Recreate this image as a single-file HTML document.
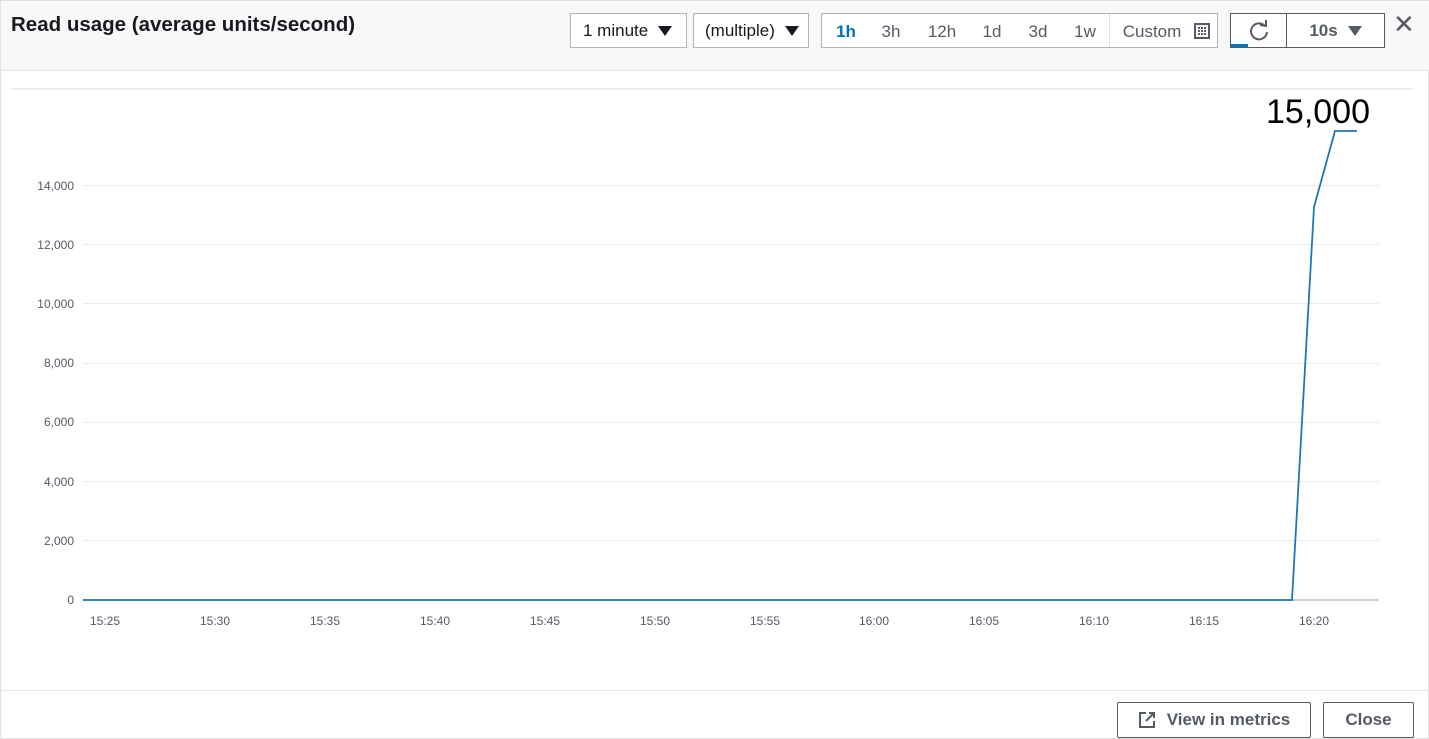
<!DOCTYPE html>
<html><head><meta charset="utf-8"><style>
*{box-sizing:border-box;margin:0;padding:0}
body{width:1429px;height:739px;background:#fff;font-family:"Liberation Sans",sans-serif;position:relative;overflow:hidden;border:1px solid #e0e0e0}
.hdr{position:absolute;left:0;top:0;width:1429px;height:70px;background:#f8f8f8;border-bottom:1px solid #e6e6e6}
.title{position:absolute;left:10px;top:12px;font-size:20.5px;font-weight:bold;color:#16191f}
.box{position:absolute;top:12px;height:35px;border:1px solid #aab7b8;background:#fff;font-size:17px;color:#16191f;display:flex;align-items:center}
.tri{display:inline-block;width:0;height:0;border-left:7px solid transparent;border-right:7px solid transparent;border-top:10px solid #16191f;margin-left:10px}
.seg span{position:absolute;top:8px;color:#545b64;transform:translateX(-50%)}
.foot{position:absolute;left:0;top:689px;width:1429px;border-top:1px solid #e6e6e6}
.btn{position:absolute;top:701px;height:36px;border:1.5px solid #545b64;border-radius:2px;background:#fff;font-size:17px;font-weight:bold;color:#545b64;display:flex;align-items:center;justify-content:center}
</style></head><body>
<div class="hdr">
<div class="title">Read usage (average units/second)</div>
<div class="box" style="left:569px;width:117px;padding-left:12px">1 minute<span class="tri"></span></div>
<div class="box" style="left:692px;width:116px;padding-left:11px">(multiple)<span class="tri"></span></div>
<div class="box seg" style="left:820px;width:397px">
<span style="left:24px;color:#0073bb;font-weight:bold">1h</span><span style="left:69px">3h</span><span style="left:120px">12h</span><span style="left:170px">1d</span><span style="left:216px">3d</span><span style="left:263px">1w</span>
<div style="position:absolute;left:287px;top:0;height:100%;border-left:1px solid #e0e0e0"></div>
<span style="left:330px">Custom</span>
<svg width="16" height="16" style="position:absolute;left:372px;top:9px" viewBox="0 0 16 16"><rect x="1" y="1" width="14" height="14" fill="none" stroke="#545b64" stroke-width="2"/><g fill="#545b64"><rect x="4" y="4" width="2" height="2"/><rect x="7" y="4" width="2" height="2"/><rect x="10" y="4" width="2" height="2"/><rect x="4" y="7" width="2" height="2"/><rect x="7" y="7" width="2" height="2"/><rect x="10" y="7" width="2" height="2"/><rect x="4" y="10" width="2" height="2"/><rect x="7" y="10" width="2" height="2"/><rect x="10" y="10" width="2" height="2"/></g></svg>
</div>
<div class="box" style="left:1229px;width:155px;border-color:#545b64">
<div style="width:56px;height:100%;border-right:1px solid #545b64;position:relative;display:flex;align-items:center;justify-content:center">
<svg width="22" height="22" viewBox="0 0 22 22"><path d="M17 6A8 8 0 1 0 19 12" fill="none" stroke="#545b64" stroke-width="2"/><path d="M12 5L18 6L18 0" fill="none" stroke="#545b64" stroke-width="2"/></svg>
<div style="position:absolute;left:0;bottom:0;width:17px;height:3px;background:#0073bb"></div></div>
<div style="flex:1;display:flex;align-items:center;justify-content:center;font-weight:bold;color:#545b64">10s<span class="tri" style="border-top-color:#545b64"></span></div>
</div>
<div style="position:absolute;left:1392px;top:8px;font-size:26px;color:#545b64">✕</div>
</div>
<svg style="position:absolute;left:0;top:0" width="1429" height="690">
<line x1="10" y1="88" x2="1412" y2="88" stroke="#eeeeee" stroke-width="2"/>
<g stroke="#ececec" stroke-width="1">
<line x1="82" y1="184.5" x2="1378" y2="184.5"/><line x1="82" y1="243.5" x2="1378" y2="243.5"/><line x1="82" y1="302.5" x2="1378" y2="302.5"/><line x1="82" y1="362.5" x2="1378" y2="362.5"/><line x1="82" y1="421.5" x2="1378" y2="421.5"/><line x1="82" y1="480.5" x2="1378" y2="480.5"/><line x1="82" y1="539.5" x2="1378" y2="539.5"/></g>
<line x1="82" y1="599" x2="1378" y2="599" stroke="#cfcfcf" stroke-width="2"/>
<g font-size="12" fill="#545b64" text-anchor="end" font-family="Liberation Sans">
<text x="73" y="189">14,000</text><text x="73" y="248">12,000</text><text x="73" y="307">10,000</text><text x="73" y="366">8,000</text><text x="73" y="425">6,000</text><text x="73" y="485">4,000</text><text x="73" y="544">2,000</text><text x="73" y="603">0</text></g>
<g font-size="12" fill="#545b64" text-anchor="middle" font-family="Liberation Sans">
<text x="104" y="624">15:25</text><text x="214" y="624">15:30</text><text x="324" y="624">15:35</text><text x="434" y="624">15:40</text><text x="544" y="624">15:45</text><text x="654" y="624">15:50</text><text x="764" y="624">15:55</text><text x="873" y="624">16:00</text><text x="983" y="624">16:05</text><text x="1093" y="624">16:10</text><text x="1203" y="624">16:15</text><text x="1313" y="624">16:20</text></g>
<polyline points="82,599 1291,599 1313,206 1334,130 1356,130" fill="none" stroke="#1f77b4" stroke-width="1.8"/>
<text x="1317" y="122" font-size="34" text-anchor="middle" fill="#000" font-family="Liberation Sans">15,000</text>
</svg>
<div class="foot"></div>
<div class="btn" style="left:1116px;width:194px">
<svg width="18" height="18" viewBox="0 0 18 18" style="margin-right:11px"><path d="M8 2H2V16H16V10" fill="none" stroke="#545b64" stroke-width="2"/><path d="M11 2H16V7M16 2L8 10" fill="none" stroke="#545b64" stroke-width="2"/></svg>View in metrics</div>
<div class="btn" style="left:1322px;width:91px">Close</div>
</body></html>
